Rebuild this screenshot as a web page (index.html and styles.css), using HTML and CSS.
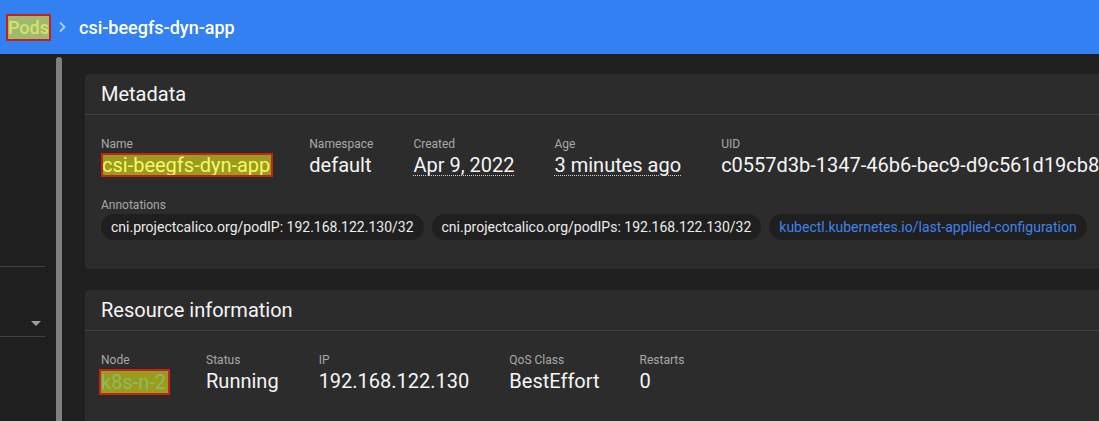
FILE: index.html
```html
<!DOCTYPE html>
<html lang="en">
<head>
<meta charset="utf-8">
<title>csi-beegfs-dyn-app</title>
<link rel="stylesheet" href="styles.css">
</head>
<body>
<header class="toolbar">
  <a class="crumb hl-pods">Pods</a>
  <svg class="chev" width="28" height="28" viewBox="0 0 28 28"><polyline points="9.5,10 13.5,14 9.5,18" fill="none" stroke="currentColor" stroke-width="1.8" stroke-linecap="round" stroke-linejoin="round"/></svg>
  <span class="title">csi-beegfs-dyn-app</span>
</header>
<div class="layout">
  <aside class="sidebar">
    <div class="ns-select"><span class="arrow"></span></div>
  </aside>
  <div class="scrollbar"></div>
  <main class="content">
    <section class="card">
      <div class="card-head">Metadata</div>
      <div class="card-body meta-body">
        <div class="row">
          <div class="field"><div class="label">Name</div><div class="value"><span class="hl-name">csi-beegfs-dyn-app</span></div></div>
          <div class="field"><div class="label">Namespace</div><div class="value">default</div></div>
          <div class="field"><div class="label">Created</div><div class="value"><span class="dotted">Apr 9, 2022</span></div></div>
          <div class="field"><div class="label">Age</div><div class="value"><span class="dotted">3 minutes ago</span></div></div>
          <div class="field"><div class="label">UID</div><div class="value">c0557d3b-1347-46b6-bec9-d9c561d19cb8</div></div>
        </div>
        <div class="annotations">
          <div class="label">Annotations</div>
          <div class="chips">
            <span class="chip">cni.projectcalico.org/podIP: 192.168.122.130/32</span>
            <span class="chip">cni.projectcalico.org/podIPs: 192.168.122.130/32</span>
            <span class="chip chip-link">kubectl.kubernetes.io/last-applied-configuration</span>
          </div>
        </div>
      </div>
    </section>
    <section class="card">
      <div class="card-head">Resource information</div>
      <div class="card-body">
        <div class="row">
          <div class="field"><div class="label">Node</div><div class="value"><span class="hl-node">k8s-n-2</span></div></div>
          <div class="field"><div class="label">Status</div><div class="value">Running</div></div>
          <div class="field"><div class="label">IP</div><div class="value">192.168.122.130</div></div>
          <div class="field"><div class="label">QoS Class</div><div class="value">BestEffort</div></div>
          <div class="field"><div class="label">Restarts</div><div class="value">0</div></div>
        </div>
      </div>
    </section>
  </main>
</div>
</body>
</html>
```
FILE: styles.css
```css
* { box-sizing: border-box; }
html, body {
  margin: 0;
  padding: 0;
  width: 1099px;
  height: 421px;
  overflow: hidden;
  background: #1f1f1f;
  font-family: Roboto, "Liberation Sans", sans-serif;
  color: #f2f2f2;
}
.toolbar {
  height: 54px;
  background: #3280f2;
  display: flex;
  align-items: center;
  padding-left: 6px;
  color: #fff;
  font-size: 18px;
  font-weight: 500;
}
.crumb {
  display: inline-block;
  height: 27px;
  line-height: 27px;
  padding: 0 2px;
}
.hl-pods {
  background: #9fba6f;
  color: #d9e16b;
  outline: 2px solid #c4231c;
  outline-offset: -2px;
}
.chev {
  display: block;
  color: rgba(255, 255, 255, 0.6);
}
.layout {
  display: flex;
  height: 367px;
}
.sidebar {
  width: 45px;
  flex-shrink: 0;
  padding-top: 212px;
}
.ns-select {
  height: 71px;
  border-top: 1px solid #414141;
  border-bottom: 1px solid #414141;
  display: flex;
  justify-content: flex-end;
  align-items: flex-end;
  padding: 0 4px 10px 0;
}
.arrow {
  width: 0;
  height: 0;
  border-left: 5px solid transparent;
  border-right: 5px solid transparent;
  border-top: 5px solid #9e9e9e;
}
.scrollbar {
  width: 6px;
  flex-shrink: 0;
  margin-left: 11px;
  margin-top: 3px;
  background: #808080;
  border-radius: 3px 3px 0 0;
}
.content {
  margin-left: 23px;
  padding-top: 20px;
  display: flex;
  flex-direction: column;
  gap: 21px;
}
.card {
  width: 1150px;
  flex-shrink: 0;
  background: #2c2c2c;
  border-radius: 4px;
}
.card-head {
  height: 41px;
  line-height: 40px;
  padding-left: 16px;
  font-size: 20px;
  border-bottom: 1px solid #434343;
  color: #f5f5f5;
}
.card-body {
  padding: 21px 16px 29px;
}
.row {
  display: flex;
  gap: 40px;
}
.label {
  font-size: 12px;
  line-height: 16px;
  color: #a8a8a8;
  margin-bottom: 1px;
  white-space: nowrap;
}
.value {
  font-size: 20px;
  line-height: 24px;
  white-space: nowrap;
  color: #f5f5f5;
}
.hl-name {
  display: inline-block;
  padding: 0 3px 0 1px;
  margin-right: -4px;
  background: #9b9b1d;
  color: #f7f76a;
  outline: 2px solid #c4231c;
  outline-offset: -2px;
}
.hl-node {
  display: inline-block;
  padding: 1px 4px 1px 2px;
  margin: 0 -4px 0 -2px;
  background: #9b9b1d;
  color: #8fbb5e;
  outline: 2px solid #c4231c;
  outline-offset: -2px;
}
.dotted {
  text-decoration: underline dotted #cfcfcf;
  text-underline-offset: 3px;
  text-decoration-thickness: 1px;
}
.annotations { margin-top: 20px; }
.chips {
  display: flex;
  gap: 8px;
}
.chip {
  height: 26px;
  line-height: 26px;
  padding: 0 10px;
  border-radius: 13px;
  background: #1f1f1f;
  font-size: 14px;
  color: #ececec;
  white-space: nowrap;
}
.chip-link { color: #3f84ec; }
```
